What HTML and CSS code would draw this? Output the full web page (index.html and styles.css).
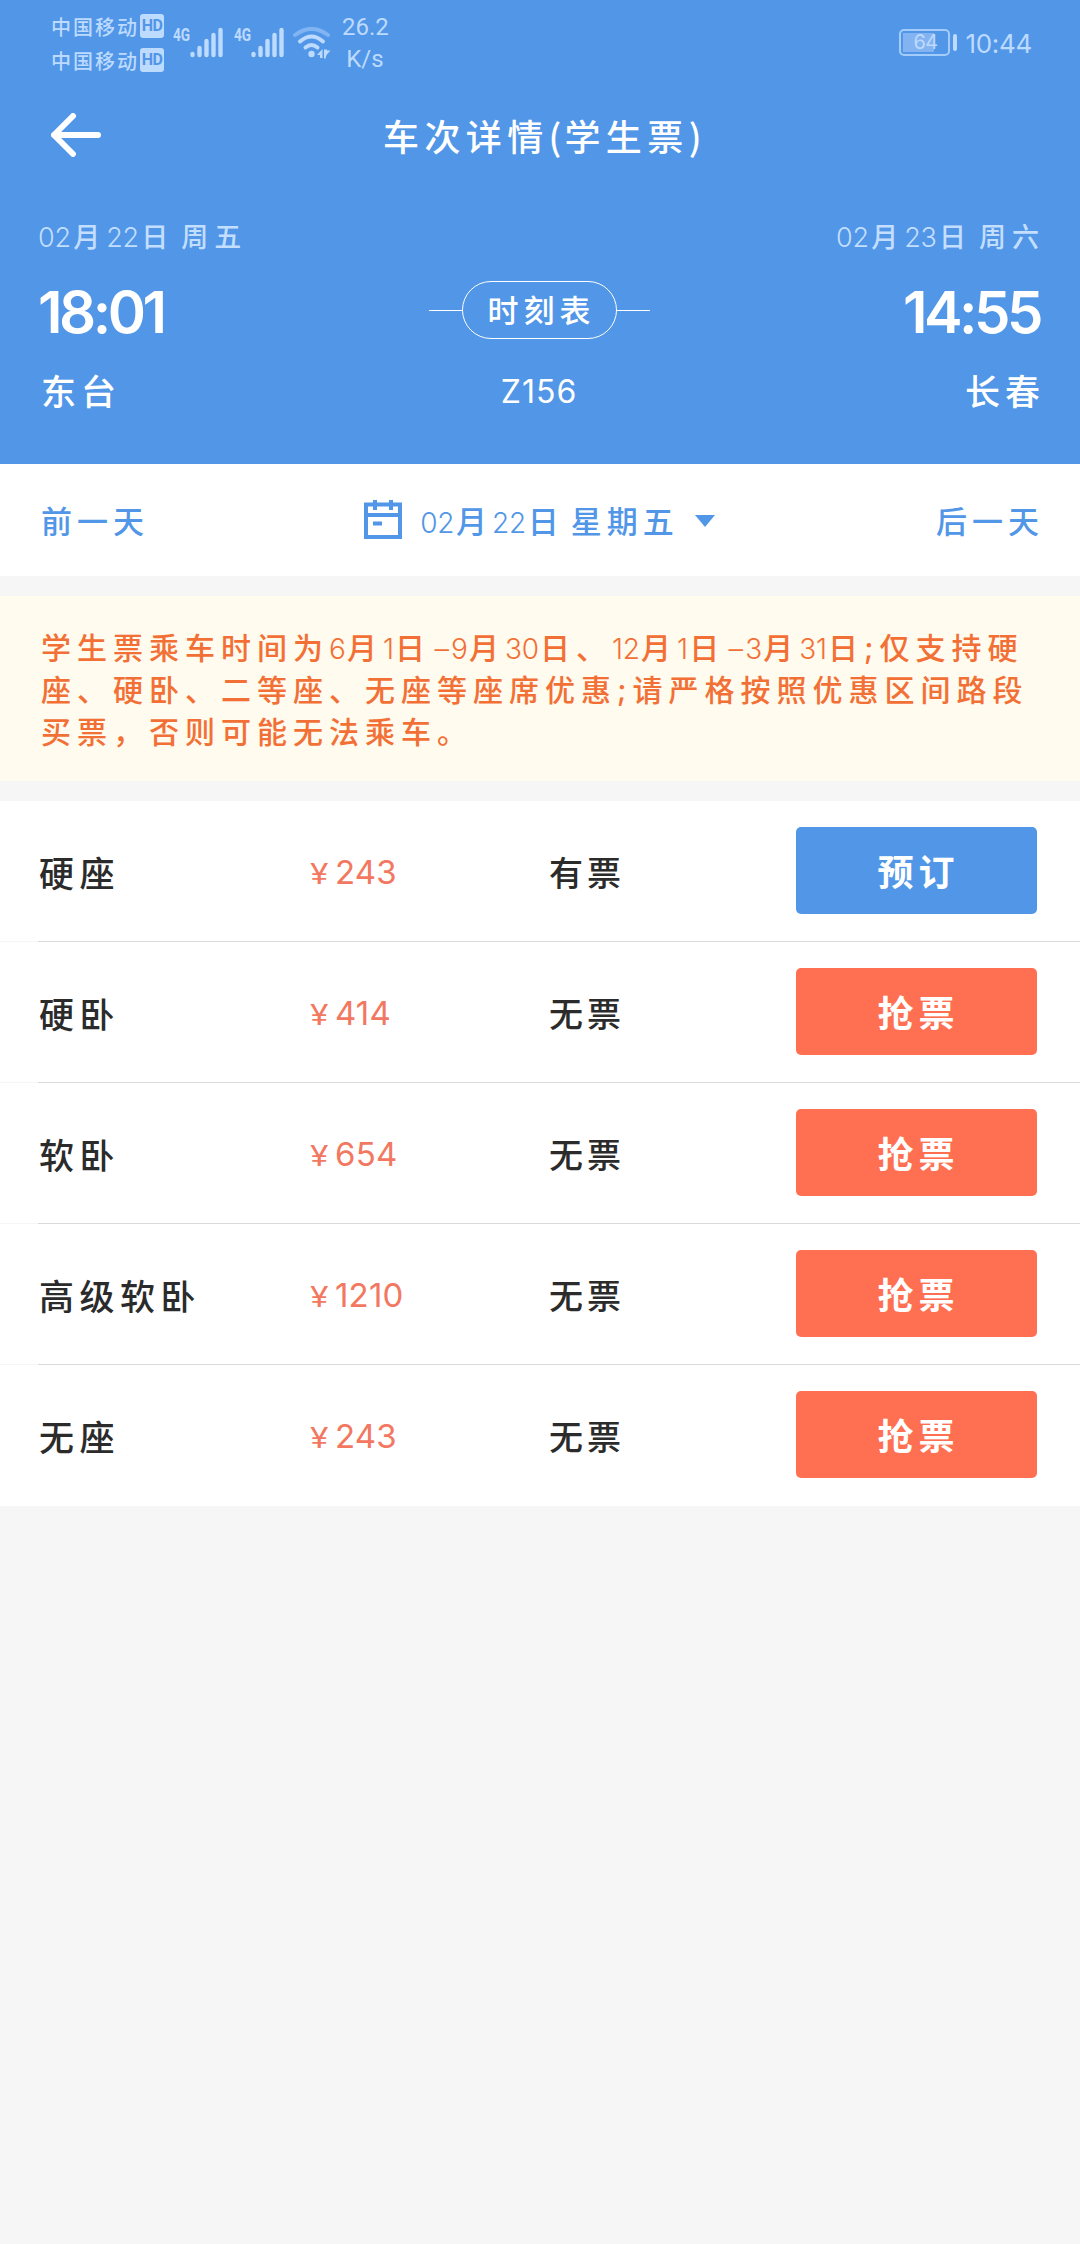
FILE: index.html
```
<!DOCTYPE html>
<html lang="zh-CN">
<head>
  <meta charset="UTF-8" />
  <title>车次详情</title>
  <link rel="stylesheet" href="styles.css">
</head>
<body>
  <div class="header">
    <div class="status-bar">
      <div class="carriers">
        <div class="carrier">中国移动<span class="hd">HD</span></div>
        <div class="carrier">中国移动<span class="hd">HD</span></div>
      </div>
      <div class="signal">
        <span class="net">4G</span>
        <svg width="34" height="31" viewBox="0 0 34 31">
          <path d="M2.5 27v1M9.5 21v7M16.5 14v14M23.5 8v20M30.5 3v25" />
        </svg>
      </div>
      <div class="signal">
        <span class="net">4G</span>
        <svg width="34" height="31" viewBox="0 0 34 31">
          <path d="M2.5 27v1M9.5 21v7M16.5 14v14M23.5 8v20M30.5 3v25" />
        </svg>
      </div>
      <svg class="wifi" width="38" height="32" viewBox="0 0 38 32">
        <path class="weak" d="M2 8Q18.500 -4 35 8" />
        <path d="M7 14.500Q18.500 4.500 30 14.500M12.500 20.500Q18.500 15.500 24.500 20.500" />
        <circle cx="18.500" cy="27" r="3.200" />
        <path class="arrows" d="M24 28l5.500-6v9h-2.500v-3zM31 22.500v9h1.500l1-3.500 4-4.500h-3.500v-1z" />
      </svg>
      <div class="speed">26.2<br>K/s</div>
      <div class="battery"><div class="level"></div><span>64</span></div>
      <div class="battery-tip"></div>
      <div class="clock">10:44</div>
    </div>

    <div class="title-bar">
      <svg class="back" width="50" height="44" viewBox="0 0 50 44">
        <path d="M47 22H3M22 3L3 22L22 41" />
      </svg>
      <div class="title">车次详情<span class="paren">(</span>学生票<span class="paren">)</span></div>
    </div>

    <div class="trip">
      <div class="stop">
        <div class="date"><span class="num">02</span>月<span class="num">22</span>日<span class="gap"></span>周五</div>
        <div class="time">18:01</div>
        <div class="station">东台</div>
      </div>
      <div class="train">
        <div class="timetable"><span class="pill">时刻表</span></div>
        <div class="train-no">Z156</div>
      </div>
      <div class="stop arrive">
        <div class="date"><span class="num">02</span>月<span class="num">23</span>日<span class="gap"></span>周六</div>
        <div class="time">14:55</div>
        <div class="station">长春</div>
      </div>
    </div>
  </div>

  <div class="day-bar">
    <div class="day">前一天</div>
    <div class="current">
      <svg width="38" height="40" viewBox="0 0 38 40">
        <path d="M2 4.500h34v32.500H2zM2 15h34M11 0v10M27 0v10M9 23.500h9" />
      </svg>
      <div class="current-date"><span class="num">02</span>月<span class="num">22</span>日<span class="gap"></span>星期五</div>
      <div class="caret"></div>
    </div>
    <div class="day">后一天</div>
  </div>

  <div class="notice">
    学生票乘车时间为<span class="num">6</span>月<span class="num">1</span>日<span class="num"><i>-</i>9</span>月<span class="num">30</span>日、<span class="num">12</span>月<span class="num">1</span>日<span class="num"><i>-</i>3</span>月<span class="num">31</span>日<span class="semi">;</span>仅支持硬<br>
    座、硬卧、二等座、无座等座席优惠<span class="semi">;</span>请严格按照优惠区间路段<br>
    买票，否则可能无法乘车。
  </div>

  <div class="seats">
    <div class="seat">
      <div class="seat-name">硬座</div>
      <div class="price"><span class="yen">¥</span>243</div>
      <div class="stock">有票</div>
      <button class="btn book">预订</button>
    </div>
    <div class="seat">
      <div class="seat-name">硬卧</div>
      <div class="price"><span class="yen">¥</span>414</div>
      <div class="stock">无票</div>
      <button class="btn">抢票</button>
    </div>
    <div class="seat">
      <div class="seat-name">软卧</div>
      <div class="price"><span class="yen">¥</span>654</div>
      <div class="stock">无票</div>
      <button class="btn">抢票</button>
    </div>
    <div class="seat">
      <div class="seat-name">高级软卧</div>
      <div class="price"><span class="yen">¥</span>1210</div>
      <div class="stock">无票</div>
      <button class="btn">抢票</button>
    </div>
    <div class="seat">
      <div class="seat-name">无座</div>
      <div class="price"><span class="yen">¥</span>243</div>
      <div class="stock">无票</div>
      <button class="btn">抢票</button>
    </div>
  </div>
</body>
</html>
```
FILE: styles.css
```
* {
  box-sizing: border-box;
}

body {
  margin: 0;
  width: 1080px;
  min-height: 2244px;
  font-family: "Noto Sans CJK SC", sans-serif;
  font-weight: 500;
  background: #f6f6f6;
  color: #2b2b2b;
  white-space: nowrap;
}

svg {
  display: block;
  flex: none;
}

.header {
  height: 464px;
  background: #5196e7;
  color: #fff;
}

/* status bar */
.status-bar {
  display: flex;
  align-items: flex-start;
  height: 86px;
  padding: 9px 48px 0 51px;
  color: #bddaff;
}

.carrier {
  display: flex;
  align-items: center;
  height: 34px;
  font-size: 20px;
  letter-spacing: 2px;
}

.hd {
  width: 24px;
  height: 24px;
  margin-left: 1px;
  border-radius: 3px;
  background: #bddaff;
  color: #5196e7;
  font: bold 16px/24px Roboto, sans-serif;
  letter-spacing: -0.5px;
  text-align: center;
}

.signal {
  display: flex;
  margin: 18px 0 0 9px;
  width: 52px;
}

.signal + .signal {
  margin-left: 9px;
}

.net {
  width: 17px;
  font: bold 19px/15px Roboto, sans-serif;
  transform: scaleX(0.72);
  transform-origin: left;
}

.signal path {
  stroke: #bddaff;
  stroke-width: 4.4;
  stroke-linecap: round;
}

.wifi {
  margin: 18px 0 0 7px;
  fill: none;
  stroke: #bddaff;
  stroke-width: 4;
  stroke-linecap: round;
}

.wifi .weak {
  stroke: #80b4f3;
}

.wifi circle,
.wifi .arrows {
  fill: #bddaff;
  stroke: none;
}

.speed {
  width: 46px;
  margin: 2px 0 0 11px;
  font: 24px/32px Roboto, sans-serif;
  text-align: center;
}

.battery {
  display: flex;
  position: relative;
  width: 51px;
  height: 27px;
  margin: 20px 0 0 auto;
  padding: 2px;
  border: 2px solid #a3ccfb;
  border-radius: 5px;
}

.level {
  width: 31px;
  background: #83b3f0;
}

.battery span {
  position: absolute;
  left: 12px;
  top: 0;
  font: 20px/23px Inter, sans-serif;
  letter-spacing: -0.5px;
}

.battery-tip {
  width: 4px;
  height: 17px;
  margin: 25px 8px 0 3px;
  border-radius: 2px;
  background: #bddaff;
}

.clock {
  margin-top: 19px;
  font: 26px/32px Inter, sans-serif;
  letter-spacing: -0.3px;
}

/* title */
.title-bar {
  display: flex;
  align-items: center;
  height: 98px;
  padding-left: 51px;
}

.back {
  fill: none;
  stroke: #fff;
  stroke-width: 6;
  stroke-linecap: round;
  stroke-linejoin: round;
}

.title {
  margin-left: 282px;
  font-size: 36px;
  letter-spacing: 5.400px;
}

.paren {
  letter-spacing: 3px;
}

/* trip */
.trip {
  display: flex;
  justify-content: space-between;
  padding: 31px 40px 0 38px;
}

.stop {
  width: 300px;
}

.date {
  height: 42px;
  line-height: 42px;
  font-size: 27px;
  letter-spacing: 6px;
  color: #c3deff;
}

.num {
  font-family: Inter, sans-serif;
  font-weight: 300;
  line-height: 0;
  letter-spacing: -0.3px;
  margin-right: 2.500px;
}

.gap {
  display: inline-block;
  width: 7px;
}

.time {
  height: 76px;
  margin-top: 17px;
  font: 600 58px/76px Inter, sans-serif;
  letter-spacing: -3.500px;
}

.station {
  margin: 13px 0 0 3px;
  font-size: 35px;
  line-height: 54px;
  letter-spacing: 5px;
}

.arrive .date,
.arrive .time,
.arrive .station {
  text-align: right;
}

.arrive .date,
.arrive .station {
  margin-right: -5px;
}

.train {
  padding-top: 66px;
  text-align: center;
}

.timetable {
  display: flex;
  align-items: center;
}

.timetable::before,
.timetable::after {
  content: "";
  width: 33px;
  height: 1px;
  background: #fff;
}

.pill {
  width: 155px;
  height: 58px;
  padding-left: 5px;
  border: 1px solid #fff;
  border-radius: 29px;
  font-size: 31px;
  line-height: 54px;
  letter-spacing: 5px;
}

.train-no {
  margin-top: 33px;
  font: 400 32px/40px Inter, sans-serif;
  letter-spacing: 1px;
}

/* day switcher */
.day-bar {
  display: flex;
  align-items: center;
  justify-content: space-between;
  height: 112px;
  padding: 0 36px 0 41px;
  background: #fff;
  color: #5196e7;
  font-size: 31px;
  letter-spacing: 5px;
}

.day,
.current-date {
  padding-bottom: 2px;
}

.current {
  display: flex;
  align-items: center;
  margin-right: 6px;
}

.current svg {
  fill: none;
  stroke: #5196e7;
  stroke-width: 4;
}

.current-date {
  margin-left: 18px;
}

.current-date .num {
  margin-right: 2px;
  font-size: 28px;
}

.caret {
  margin: 2px 0 0 16px;
  border: 10px solid transparent;
  border-top: 12px solid #5196e7;
  border-bottom: 0;
}

/* notice */
.notice {
  height: 185px;
  margin: 20px 0;
  padding: 29px 0 0 41px;
  background: #fffbee;
  color: #f27036;
  font-size: 30px;
  line-height: 42px;
  letter-spacing: 6px;
}

.notice .num {
  margin-right: 1.400px;
  font-size: 28px;
}

.notice i {
  display: inline-block;
  width: 20px;
  font-style: normal;
  transform: scaleX(1.7);
  transform-origin: left;
}

.semi {
  font-family: Inter, sans-serif;
  line-height: 0;
}

/* seats */
.seats {
  background: #fff;
}

.seat {
  display: grid;
  grid-template-columns: 272px 239px 247px 241px;
  align-items: center;
  height: 141px;
  padding: 0 0 2px 38px;
  background:
    linear-gradient(#d9d9d9, #d9d9d9) 38px 100% / 100% 1px no-repeat,
    linear-gradient(#f6f6f6, #f6f6f6) 0 100% / 100% 1px no-repeat;
  font-size: 35px;
  letter-spacing: 5.500px;
}

.seat:last-child {
  background: none;
}

.seat-name,
.stock {
  padding-top: 2px;
}

.seat-name {
  padding-left: 1px;
}

.stock {
  font-size: 34px;
  letter-spacing: 4px;
}

.price {
  padding-top: 5px;
  color: #f27862;
  font: 400 33px/44px Inter, sans-serif;
  letter-spacing: 0.2px;
}

.yen {
  display: inline-block;
  width: 25px;
  font-size: 28px;
  transform: scaleX(1.2);
  transform-origin: left;
}

.btn {
  height: 87px;
  padding: 0 0 2px 4px;
  border: 0;
  border-radius: 5px;
  background: #ff6f52;
  color: #fff;
  font: bold 36px "Noto Sans CJK SC", sans-serif;
  letter-spacing: 5px;
}

.book {
  background: #5196e7;
}
```
